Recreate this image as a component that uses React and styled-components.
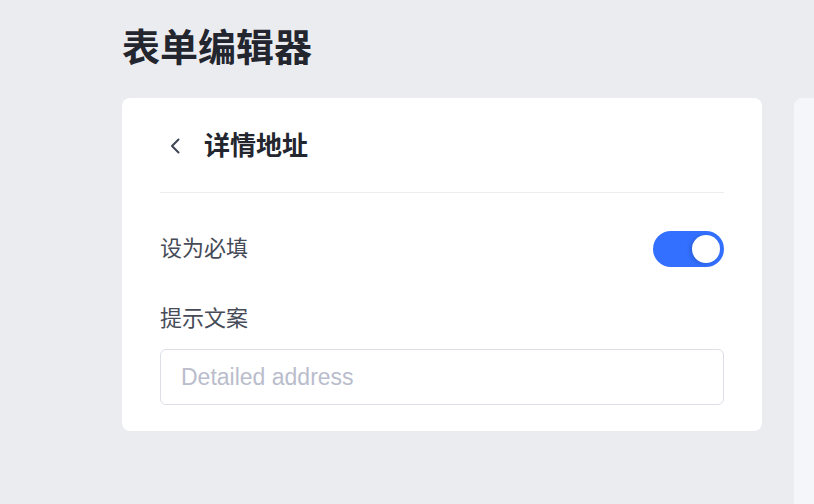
import styled, { createGlobalStyle } from "styled-components"

const Global = createGlobalStyle`
  html, body { margin: 0; padding: 0; }
  body {
    background: #ebecf0;
    font-family: "Liberation Sans", "Noto Sans CJK SC", sans-serif;
    width: 814px;
    height: 504px;
    overflow: hidden;
  }
`

const Page = styled.div`
  display: flex;
  flex-direction: column;
  padding: 20px 0 0 122px;
  height: 504px;
  box-sizing: border-box;
`

const PageTitle = styled.h1`
  margin: 0 0 22px 0;
  font-size: 38px;
  line-height: 56px;
  font-weight: 700;
  color: #23262e;
`

const Body = styled.div`
  display: flex;
  gap: 32px;
  flex: 1;
  align-items: flex-start;
`

const Card = styled.div`
  width: 640px;
  background: #fff;
  border-radius: 8px;
  padding: 0 38px 26px;
  box-sizing: border-box;
`

const Side = styled.div`
  flex: 1;
  align-self: stretch;
  background: #f5f6fa;
  border-top-left-radius: 8px;
`

const Header = styled.div`
  display: flex;
  align-items: center;
  gap: 20px;
  height: 95px;
  box-sizing: border-box;
  padding-top: 2px;
  border-bottom: 1px solid #eceef2;
  padding-left: 8px;
`

const HeaderTitle = styled.span`
  font-size: 26px;
  line-height: 34px;
  font-weight: 700;
  color: #23262e;
`

const Row = styled.div`
  display: flex;
  align-items: center;
  justify-content: space-between;
  height: 111px;
`

const Label = styled.span`
  font-size: 22px;
  line-height: 30px;
  color: #464b58;
`

const Toggle = styled.div`
  width: 71px;
  height: 36px;
  border-radius: 18px;
  background: ${p => (p.on ? "#3370ff" : "#d0d3da")};
  display: flex;
  align-items: center;
  justify-content: ${p => (p.on ? "flex-end" : "flex-start")};
  padding: 0 4px;
  box-sizing: border-box;
`

const Knob = styled.div`
  width: 28px;
  height: 28px;
  border-radius: 50%;
  background: #fff;
  box-shadow: -2px 1px 4px rgba(0, 0, 0, 0.15);
`

const Field = styled.div`
  display: flex;
  flex-direction: column;
  gap: 15px;
`

const Input = styled.input`
  height: 56px;
  border: 1px solid #dcdfe8;
  border-radius: 6px;
  padding: 0 20px;
  font-size: 23px;
  font-family: "Liberation Sans", "Noto Sans CJK SC", sans-serif;
  color: #23262e;
  outline: none;
  box-sizing: border-box;
  &::placeholder { color: #b9bdcc; }
`

const Back = () => (
  <svg width="16" height="18" viewBox="0 0 16 18" fill="none">
    <path d="M10.5 2.5 L4 9 L10.5 15.5" stroke="#3d4452" strokeWidth="2" strokeLinecap="round" strokeLinejoin="round" />
  </svg>
)

const App = () => {
  return (
    <Page>
      <Global />
      <PageTitle>表单编辑器</PageTitle>
      <Body>
        <Card>
          <Header>
            <Back />
            <HeaderTitle>详情地址</HeaderTitle>
          </Header>
          <Row>
            <Label>设为必填</Label>
            <Toggle on>
              <Knob />
            </Toggle>
          </Row>
          <Field>
            <Label>提示文案</Label>
            <Input placeholder="Detailed address" />
          </Field>
        </Card>
        <Side />
      </Body>
    </Page>
  )
}

export default App
